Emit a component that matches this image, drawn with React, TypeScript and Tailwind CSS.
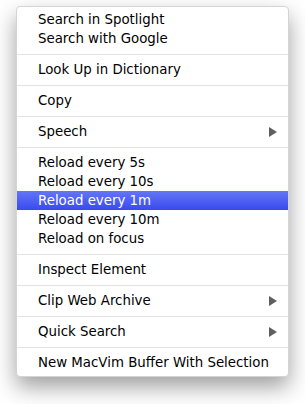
import React from 'react';

type Entry = { label?: string; sub?: boolean; active?: boolean; sep?: boolean };

const entries: Entry[] = [
  { label: 'Search in Spotlight' },
  { label: 'Search with Google' },
  { sep: true },
  { label: 'Look Up in Dictionary' },
  { sep: true },
  { label: 'Copy' },
  { sep: true },
  { label: 'Speech', sub: true },
  { sep: true },
  { label: 'Reload every 5s' },
  { label: 'Reload every 10s' },
  { label: 'Reload every 1m', active: true },
  { label: 'Reload every 10m' },
  { label: 'Reload on focus' },
  { sep: true },
  { label: 'Inspect Element' },
  { sep: true },
  { label: 'Clip Web Archive', sub: true },
  { sep: true },
  { label: 'Quick Search', sub: true },
  { sep: true },
  { label: 'New MacVim Buffer With Selection' },
];

const Arrow = ({ active }: { active?: boolean }) => (
  <svg width="8" height="10" viewBox="0 0 8 10" className="shrink-0">
    <path d="M0 0 L8 5 L0 10 Z" fill={active ? '#ffffff' : '#5f5f5f'} />
  </svg>
);

const App = () => {
  return (
    <div className="w-[305px] h-[404px] bg-white pt-[6px] pl-[16px]">
      <div
        className="w-[273px] bg-white rounded-[4px] border border-[#d4d4d4] pt-[3px] pb-[4px] shadow-[0_10px_22px_rgba(0,0,0,0.38)]"
        style={{ fontFamily: '"DejaVu Sans", "Liberation Sans", sans-serif' }}
      >
        {entries.map((e, i) =>
          e.sep ? (
            <div key={i} className="h-3 pt-[6px]">
              <div className="h-px bg-[#e3e3e3]" />
            </div>
          ) : (
            <div
              key={i}
              className={
                e.active
                  ? 'h-[19px] flex items-center justify-between pl-[21px] pr-[11px] bg-gradient-to-b from-[#6475f5] to-[#3b48ef] text-white'
                  : 'h-[19px] flex items-center justify-between pl-[21px] pr-[11px] text-black'
              }
            >
              <span className="text-[13.35px] leading-[19px]">{e.label}</span>
              {e.sub && <Arrow active={e.active} />}
            </div>
          )
        )}
      </div>
    </div>
  );
};

export default App;
